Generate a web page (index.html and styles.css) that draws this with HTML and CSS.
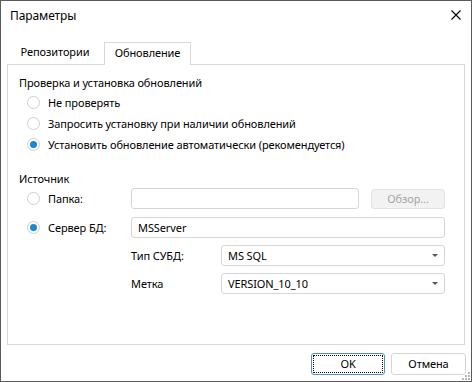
FILE: index.html
```html
<!DOCTYPE html>
<html lang="ru">
<head>
    <meta charset="UTF-8">
    <title>Параметры</title>
    <link rel="stylesheet" href="styles.css">
</head>
<body>
    <div class="dialog">
        <!-- Title bar -->
        <div class="titlebar">
            <span class="title">Параметры</span>
            <svg class="close" width="10" height="10" viewBox="0 0 10 10">
                <path d="M0.5 0.5 L9.5 9.5 M9.5 0.5 L0.5 9.5" stroke="#000" stroke-width="1.1" fill="none"/>
            </svg>
        </div>

        <!-- Tabs -->
        <div class="tabs">
            <div class="tab">Репозитории</div>
            <div class="tab active">Обновление</div>
        </div>

        <div class="panel">
            <div class="group-title">Проверка и установка обновлений</div>
            <div class="radio-list">
                <label class="radio"><span class="dot"></span>Не проверять</label>
                <label class="radio"><span class="dot"></span>Запросить установку при наличии обновлений</label>
                <label class="radio"><span class="dot checked"></span>Установить обновление автоматически (рекомендуется)</label>
            </div>

            <div class="group-title source">Источник</div>
            <div class="row first">
                <label class="radio wide"><span class="dot"></span>Папка:</label>
                <div class="input folder"></div>
                <div class="btn disabled">Обзор...</div>
            </div>
            <div class="row">
                <label class="radio wide"><span class="dot checked"></span>Сервер БД:</label>
                <div class="input grow">MSServer</div>
            </div>
            <div class="row sub">
                <span class="sub-label">Тип СУБД:</span>
                <div class="input select grow">MS SQL<span class="arrow"></span></div>
            </div>
            <div class="row sub">
                <span class="sub-label">Метка</span>
                <div class="input select grow">VERSION_10_10<span class="arrow"></span></div>
            </div>
        </div>

        <div class="footer">
            <div class="btn default">OK</div>
            <div class="btn">Отмена</div>
        </div>

        <svg class="grip" width="9" height="9" viewBox="0 0 9 9">
            <rect x="7" y="1" width="2" height="2" fill="#b8b8b8"/>
            <rect x="4" y="4" width="2" height="2" fill="#b8b8b8"/>
            <rect x="7" y="4" width="2" height="2" fill="#b8b8b8"/>
            <rect x="1" y="7" width="2" height="2" fill="#b8b8b8"/>
            <rect x="4" y="7" width="2" height="2" fill="#b8b8b8"/>
            <rect x="7" y="7" width="2" height="2" fill="#b8b8b8"/>
        </svg>
    </div>
</body>
</html>
```

FILE: styles.css
```css
/* Reset */
* {
    margin: 0;
    padding: 0;
    box-sizing: border-box;
}

body {
    background: #fff;
    font-family: 'Noto Sans', 'DejaVu Sans', sans-serif;
    font-size: 11px;
    letter-spacing: -0.1px;
    color: #000;
}

.dialog {
    position: relative;
    width: 472px;
    height: 382px;
    border: 1px solid #5a5a5a;
    background: #fff;
}

/* Title bar */
.titlebar {
    height: 41px;
    display: flex;
    justify-content: space-between;
    padding: 7px 10px 0 9px;
}

.title {
    font-size: 12px;
    line-height: 16px;
}

.close {
    margin-top: 2px;
}

/* Tabs */
.tabs {
    display: flex;
    height: 22px;
    padding-left: 11px;
}

.tab {
    width: 86px;
    text-align: center;
    line-height: 20px;
    margin-right: 6px;
}

.tab.active {
    position: relative;
    z-index: 1;
    width: 87px;
    height: 23px;
    background: #fff;
    border: 1px solid #d9d9d9;
    border-bottom: none;
}

/* Panel */
.panel {
    height: 281px;
    margin: 0 6px 0 6px;
    border: 1px solid #d9d9d9;
    padding: 10px 19px 0 11px;
}

.group-title {
    line-height: 16px;
}

.group-title.source {
    margin-top: 16px;
}

.radio-list {
    padding-top: 1px;
}

.radio {
    display: flex;
    align-items: center;
    height: 21px;
    padding-left: 8px;
}

.radio.wide {
    width: 112px;
    flex-shrink: 0;
}

.dot {
    width: 13px;
    height: 13px;
    border: 1px solid #cfcfcf;
    border-radius: 50%;
    margin-right: 8px;
    display: flex;
    align-items: center;
    justify-content: center;
}

.dot.checked::after {
    content: "";
    width: 7px;
    height: 7px;
    border-radius: 50%;
    background: #1c86d6;
}

/* Source rows */
.row {
    display: flex;
    align-items: center;
    margin-top: 8px;
}

.row.first {
    margin-top: 1px;
}

.row.sub {
    margin-top: 7px;
    padding-left: 112px;
}

.sub-label {
    width: 90px;
    flex-shrink: 0;
}

.input {
    height: 21px;
    border: 1px solid #d6d6d6;
    border-radius: 3px;
    line-height: 19px;
    padding-left: 6px;
    position: relative;
}

.input.folder {
    width: 228px;
}

.input.grow {
    flex: 1;
}

.arrow {
    position: absolute;
    right: 6px;
    top: 8px;
    width: 0;
    height: 0;
    border-left: 3px solid transparent;
    border-right: 3px solid transparent;
    border-top: 3px solid #555;
}

/* Buttons */
.btn {
    width: 74px;
    height: 22px;
    border: 1px solid #d6d6d6;
    border-radius: 3px;
    background: #fff;
    text-align: center;
    line-height: 20px;
}

.row .btn {
    height: 20px;
    line-height: 18px;
    margin-left: 12px;
}

.btn.disabled {
    background: #f2f2f2;
    border-color: #e2e2e2;
    color: #a6a6a6;
}

.footer {
    display: flex;
    justify-content: flex-end;
    gap: 6px;
    padding: 8px 5px 0 0;
}

.footer .btn:last-child {
    width: 75px;
}

.btn.default {
    border-color: #4f8fd3;
    outline: 1px dotted #000;
    outline-offset: -3px;
}

.grip {
    position: absolute;
    right: 1px;
    bottom: 1px;
}
```
